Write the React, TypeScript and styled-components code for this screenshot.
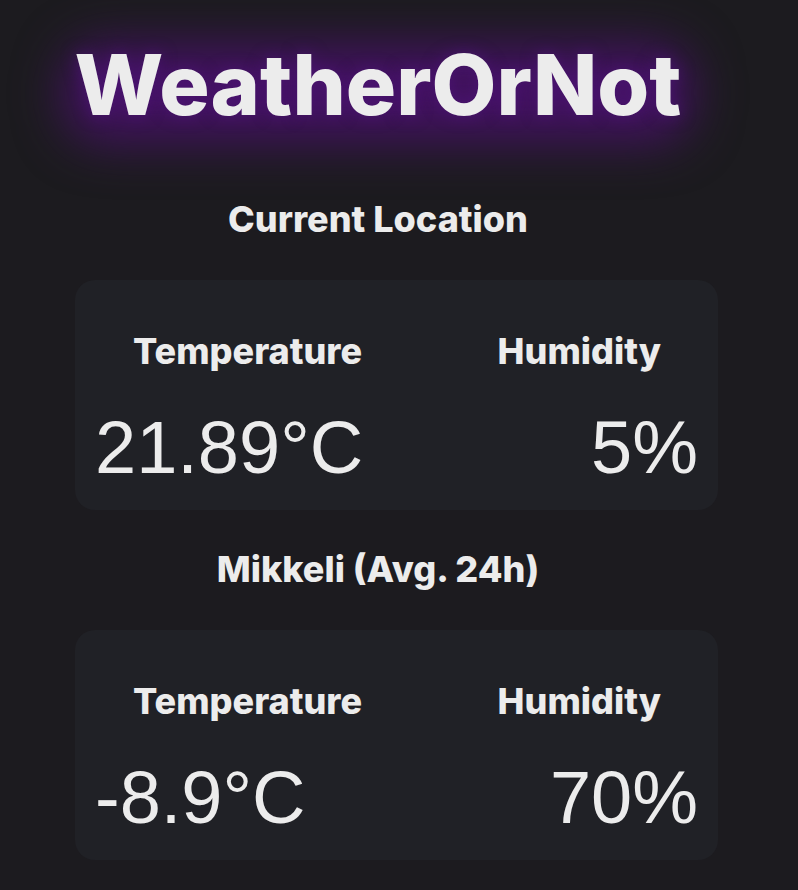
import React from "react";
import styled, { createGlobalStyle } from "styled-components";

const GlobalStyle = createGlobalStyle`
  html, body {
    margin: 0;
    padding: 0;
    background: #1c1b1f;
  }
  body {
    font-family: Inter, "Noto Sans", sans-serif;
    color: #ececec;
  }
`;

const Page = styled.main`
  width: 756px;
  display: flex;
  flex-direction: column;
  align-items: center;
  padding-top: 43px;
  padding-bottom: 29px;
`;

const Title = styled.h1`
  position: relative;
  z-index: 0;
  margin: 0 0 74px;
  font-family: Inter, "Noto Sans", sans-serif;
  font-weight: 800;
  font-size: 84px;
  line-height: 1;
  letter-spacing: 0;
  color: #ececec;
  text-shadow: 0 0 16px rgba(80, 20, 125, 0.7);

  &::before {
    content: "";
    position: absolute;
    z-index: -1;
    left: -12px;
    right: -12px;
    top: 0;
    bottom: -16px;
    border-radius: 40px;
    background: #42125f;
    filter: blur(24px);
  }
`;

const SectionTitle = styled.h2`
  margin: 0 0 43px;
  font-family: Inter, "Noto Sans", sans-serif;
  font-weight: 800;
  font-size: 36px;
  line-height: 1;
  letter-spacing: 0;
  color: #ececec;
`;

const Card = styled.section<{ $last?: boolean }>`
  align-self: flex-start;
  margin-left: 75px;
  width: 643px;
  box-sizing: border-box;
  background: #202126;
  border-radius: 20px;
  padding: 53px 0 25px;
  margin-bottom: ${(p) => (p.$last ? "0" : "41px")};
  display: flex;
  flex-direction: column;
  gap: 42px;
`;

const LabelRow = styled.div`
  display: flex;
  justify-content: space-between;
  padding: 0 57px 0 58px;
`;

const Label = styled.span`
  font-family: Inter, "Noto Sans", sans-serif;
  font-weight: 800;
  font-size: 36px;
  line-height: 1;
  letter-spacing: 0;
`;

const ValueRow = styled.div`
  display: flex;
  justify-content: space-between;
  padding: 0 20px;
`;

const Value = styled.span`
  font-family: "Liberation Sans", Arial, sans-serif;
  font-weight: 400;
  font-size: 74px;
  line-height: 1;
`;

type Reading = { title: string; temp: string; humidity: string };

const readings: Reading[] = [
  { title: "Current Location", temp: "21.89°C", humidity: "5%" },
  { title: "Mikkeli (Avg. 24h)", temp: "-8.9°C", humidity: "70%" },
];

export default function App() {
  return (
    <>
      <GlobalStyle />
      <Page>
        <Title>WeatherOrNot</Title>
        {readings.map((r, i) => (
          <React.Fragment key={r.title}>
            <SectionTitle>{r.title}</SectionTitle>
            <Card $last={i === readings.length - 1}>
              <LabelRow>
                <Label>Temperature</Label>
                <Label>Humidity</Label>
              </LabelRow>
              <ValueRow>
                <Value>{r.temp}</Value>
                <Value>{r.humidity}</Value>
              </ValueRow>
            </Card>
          </React.Fragment>
        ))}
      </Page>
    </>
  );
}
